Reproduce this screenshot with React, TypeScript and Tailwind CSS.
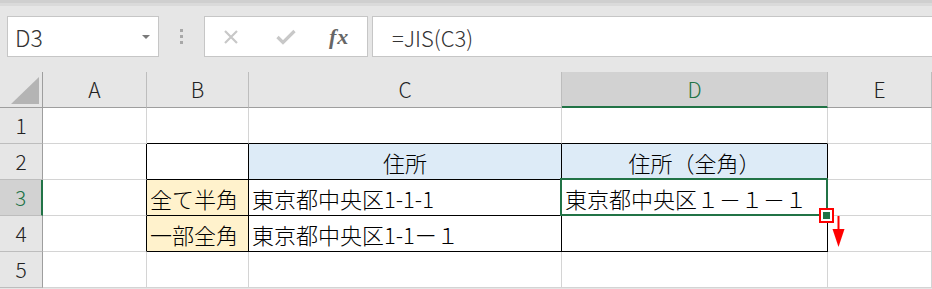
import React from "react";

const jp = "font-['Noto_Sans_CJK_JP',sans-serif]";

const G = "border-r border-b border-r-[#d4d4d4] border-b-[#d4d4d4] bg-white";
const TOP = "border-r border-b border-r-[#d4d4d4] border-b-black bg-white";
const LEFT = "border-r border-b border-r-black border-b-[#d4d4d4] bg-white";
const BOX = "border-r border-b border-r-black border-b-black";

function Cell({ className, children }: { className: string; children?: React.ReactNode }) {
  return (
    <div className={`flex items-center whitespace-nowrap text-[22px] font-light leading-none text-black ${className}`}>
      {children}
    </div>
  );
}

function ColHead({ label, active }: { label: string; active?: boolean }) {
  return (
    <div
      className={
        active
          ? "flex items-center justify-center border-r border-b-2 border-r-[#bdbdbd] border-b-[#217346] bg-[#d2d2d2] text-[21px] font-light leading-none text-[#217346]"
          : "flex items-center justify-center border-r border-b border-r-[#bdbdbd] border-b-[#9e9e9e] bg-[#e6e6e6] text-[21px] font-light leading-none text-[#222]"
      }
    >
      {label}
    </div>
  );
}

function RowHead({ label, active }: { label: string; active?: boolean }) {
  return (
    <div
      className={
        active
          ? "flex items-center justify-center border-r-2 border-b border-r-[#217346] border-b-[#bdbdbd] bg-[#d2d2d2] text-[21px] font-light leading-none text-[#217346]"
          : "flex items-center justify-center border-r border-b border-r-[#9e9e9e] border-b-[#bdbdbd] bg-[#e6e6e6] text-[21px] font-light leading-none text-[#222]"
      }
    >
      {label}
    </div>
  );
}

function FormulaBar() {
  return (
    <div className="flex h-[41px] items-stretch pl-[7px]">
      <div className="flex w-[152px] items-center justify-between border border-[#c6c6c6] bg-white pl-[7px] pr-[8px]">
        <span className="pt-[2px] text-[23px] font-light leading-none text-[#333]">D3</span>
        <span className="h-0 w-0 border-x-[4px] border-t-[4px] border-x-transparent border-t-[#7a7a7a]" />
      </div>
      <div className="flex w-[45px] flex-col items-center justify-center gap-[3px]">
        <span className="h-[3px] w-[3px] bg-[#a8a8a8]" />
        <span className="h-[3px] w-[3px] bg-[#a8a8a8]" />
        <span className="h-[3px] w-[3px] bg-[#a8a8a8]" />
      </div>
      <div className="flex w-[164px] items-center border border-[#c6c6c6] bg-white">
        <svg className="ml-[18px]" width="16" height="16" viewBox="0 0 16 16">
          <path d="M2 2 L14 14 M14 2 L2 14" stroke="#c8c8c8" strokeWidth="2.2" fill="none" />
        </svg>
        <svg className="ml-[37px]" width="20" height="16" viewBox="0 0 20 16">
          <path d="M1.5 8 L7 13.5 L18.5 2" stroke="#c8c8c8" strokeWidth="3.2" fill="none" />
        </svg>
        <span className="ml-[33px] font-['Liberation_Serif',serif] text-[22px] font-bold italic leading-none tracking-[1px] text-[#666]">
          fx
        </span>
      </div>
      <div className="ml-[4px] flex flex-1 items-center border-y border-l border-[#c6c6c6] bg-white pl-[19px]">
        <span className="text-[22px] font-light leading-none text-[#333]">=JIS(C3)</span>
      </div>
    </div>
  );
}

export default function App() {
  return (
    <div className={`h-[289px] w-[932px] overflow-hidden bg-[#e6e6e6] ${jp}`}>
      <div className="h-[3px] bg-[#cfcfcf]" />
      <div className="h-[3px] bg-[#dadada]" />
      <div className="pt-[10px]">
        <FormulaBar />
      </div>
      <div className="mt-[15px] grid grid-cols-[43px_104px_102px_313px_266px_104px] grid-rows-[36px_36px_36px_36px_36px_36px]">
        <div className="flex items-end justify-end border-r border-b border-r-[#9e9e9e] border-b-[#9e9e9e] bg-[#e6e6e6] pb-[3px] pr-[3px]">
          <svg width="28" height="27" viewBox="0 0 28 27">
            <polygon points="28,0 28,27 0,27" fill="#b4b4b4" />
          </svg>
        </div>
        <ColHead label="A" />
        <ColHead label="B" />
        <ColHead label="C" />
        <ColHead label="D" active />
        <ColHead label="E" />

        <RowHead label="1" />
        <Cell className={G} />
        <Cell className={TOP} />
        <Cell className={TOP} />
        <Cell className={TOP} />
        <Cell className={G} />

        <RowHead label="2" />
        <Cell className={LEFT} />
        <Cell className={`${BOX} bg-white`} />
        <Cell className={`${BOX} justify-center bg-[#ddebf7]`}>住所</Cell>
        <Cell className={`${BOX} justify-center bg-[#ddebf7]`}>住所（全角）</Cell>
        <Cell className={G} />

        <RowHead label="3" active />
        <Cell className={LEFT} />
        <Cell className={`${BOX} bg-[#fff2cc] pl-[3px]`}>全て半角</Cell>
        <Cell className={`${BOX} bg-white pl-[3px]`}>東京都中央区1-1-1</Cell>
        <Cell className={`${BOX} relative bg-white pl-[3px]`}>
          東京都中央区１－１－１
          <div className="absolute -bottom-px -left-[2px] -right-px -top-[2px] border-2 border-[#217346]" />
          <div className="absolute left-[257px] top-[28px] flex h-[15px] w-[15px] items-center justify-center border-2 border-[#ff0000] bg-white">
            <div className="h-[7px] w-[7px] bg-[#217346]" />
          </div>
          <svg className="absolute left-[270px] top-[36px]" width="13" height="32" viewBox="0 0 13 32">
            <rect x="5.5" y="0" width="2" height="16" fill="#ff0000" />
            <polygon points="0.5,13 12.5,13 6.5,31" fill="#ff0000" />
          </svg>
        </Cell>
        <Cell className={G} />

        <RowHead label="4" />
        <Cell className={LEFT} />
        <Cell className={`${BOX} bg-[#fff2cc] pl-[3px]`}>一部全角</Cell>
        <Cell className={`${BOX} bg-white pl-[3px]`}>東京都中央区1-1ー１</Cell>
        <Cell className={`${BOX} bg-white`} />
        <Cell className={G} />

        <RowHead label="5" />
        <Cell className={G} />
        <Cell className={G} />
        <Cell className={G} />
        <Cell className={G} />
        <Cell className={G} />
      </div>
    </div>
  );
}
